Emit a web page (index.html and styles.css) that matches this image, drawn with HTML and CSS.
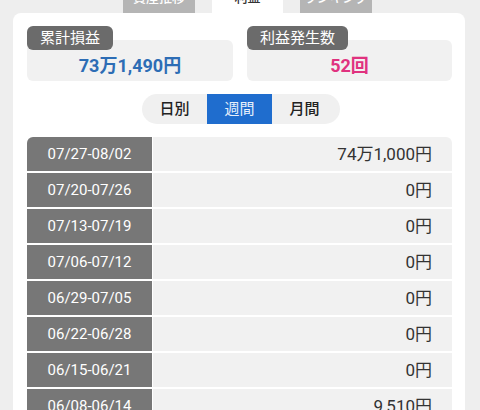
FILE: index.html
```html
<!DOCTYPE html>
<html lang="ja">
<head>
<meta charset="utf-8">
<link rel="stylesheet" href="styles.css">
</head>
<body>
<div class="tabs">
  <div class="tab">資産推移</div>
  <div class="tab active">利益</div>
  <div class="tab">ランキング</div>
</div>
<div class="card">
  <div class="stats">
    <div class="stat">
      <div class="badge">累計損益</div>
      <div class="box blue">73万1,490円</div>
    </div>
    <div class="stat">
      <div class="badge">利益発生数</div>
      <div class="box pink">52回</div>
    </div>
  </div>
  <div class="seg-wrap">
    <div class="seg">
      <div class="seg-item">日別</div>
      <div class="seg-item on">週間</div>
      <div class="seg-item">月間</div>
    </div>
  </div>
  <div class="table">
    <div class="row"><div class="date">07/27-08/02</div><div class="val">74万1,000円</div></div>
    <div class="row"><div class="date">07/20-07/26</div><div class="val">0円</div></div>
    <div class="row"><div class="date">07/13-07/19</div><div class="val">0円</div></div>
    <div class="row"><div class="date">07/06-07/12</div><div class="val">0円</div></div>
    <div class="row"><div class="date">06/29-07/05</div><div class="val">0円</div></div>
    <div class="row"><div class="date">06/22-06/28</div><div class="val">0円</div></div>
    <div class="row"><div class="date">06/15-06/21</div><div class="val">0円</div></div>
    <div class="row"><div class="date">06/08-06/14</div><div class="val">9,510円</div></div>
  </div>
</div>
</body>
</html>
```
FILE: styles.css
```css
html, body {
  margin: 0;
  padding: 0;
}
body {
  background: #eeeeee;
  font-family: Roboto, "Noto Sans CJK JP", sans-serif;
  color: #333;
  overflow: hidden;
}
.tabs {
  display: flex;
  gap: 17px;
  padding-left: 123px;
  margin-top: -17px;
  height: 30px;
}
.tab {
  width: 72px;
  height: 30px;
  background: #b5b5b5;
  color: #fff;
  font-size: 13px;
  line-height: 30px;
  text-align: center;
  font-weight: 500;
}
.tab.active {
  background: #fff;
  color: #333;
  width: 71px;
}
.card {
  margin: 0 15px 0 13px;
  background: #fff;
  border-radius: 8px;
  padding: 13px 13px 0 14px;
  height: 420px;
}
.stats {
  display: flex;
  gap: 14px;
}
.stat {
  flex: 1;
  display: flex;
  flex-direction: column;
  align-items: flex-start;
}
.stat:first-child { flex: 0 0 206px; }
.badge {
  position: relative;
  z-index: 1;
  background: #6b6b6b;
  color: #fff;
  font-size: 15px;
  height: 24px;
  line-height: 24px;
  padding: 0 13px;
  border-radius: 6px;
}
.box {
  align-self: stretch;
  margin-top: -10px;
  height: 41px;
  padding-top: 10px;
  box-sizing: border-box;
  background: #f1f1f1;
  border-radius: 6px;
  text-align: center;
  font-size: 18px;
  font-weight: 700;
  line-height: 31px;
}
.blue { color: #2d6db5; }
.pink { color: #e0327f; }
.seg-wrap {
  display: flex;
  justify-content: center;
  margin-top: 13px;
  padding-left: 3px;
}
.seg {
  display: flex;
  background: #f0f0f0;
  border-radius: 15px;
  height: 30px;
  padding: 0 3px 0 0;
}
.seg-item {
  width: 65px;
  line-height: 30px;
  text-align: center;
  font-size: 15px;
  font-weight: 500;
  color: #222;
}
.seg-item.on {
  background: #1f6dce;
  color: #e8f0fb;
  font-weight: 400;
}
.table {
  margin-top: 13px;
  display: flex;
  flex-direction: column;
  gap: 2px;
}
.row {
  display: flex;
  height: 34px;
  gap: 1px;
}
.date {
  width: 125px;
  background: #777777;
  color: #fff;
  font-size: 15px;
  line-height: 34px;
  text-align: center;
}
.val {
  flex: 1;
  background: #f1f1f1;
  font-size: 17px;
  line-height: 34px;
  text-align: right;
  padding-right: 20px;
  color: #333;
}
.row:first-child .date { border-top-left-radius: 6px; }
.row:first-child .val { border-top-right-radius: 6px; }
```
